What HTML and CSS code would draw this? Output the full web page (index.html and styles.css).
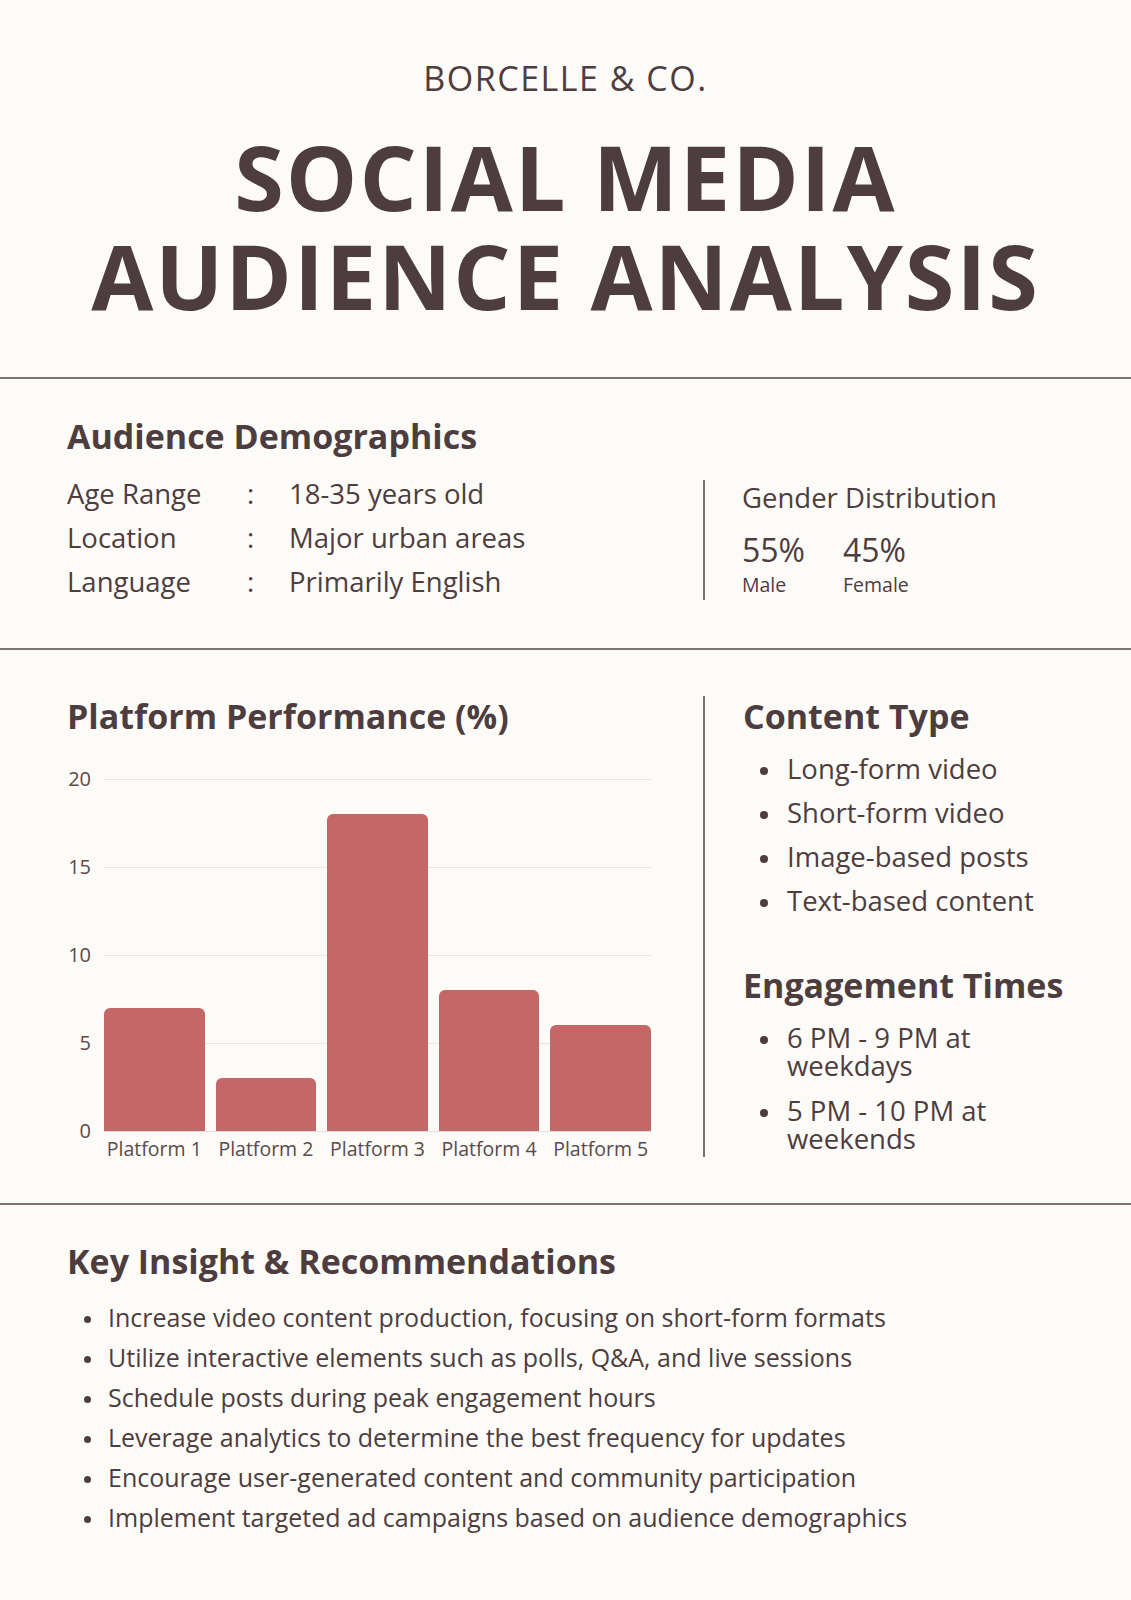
FILE: index.html
```html
<!DOCTYPE html>
<html lang="en">
<head>
<meta charset="utf-8">
<title>Social Media Audience Analysis</title>
<link rel="stylesheet" href="styles.css">
</head>
<body>
<div class="page">
  <header class="hero">
    <p class="brand">BORCELLE &amp; CO.</p>
    <h1 class="title"><span class="title-line">SOCIAL MEDIA</span><span class="title-line">AUDIENCE ANALYSIS</span></h1>
  </header>

  <section class="section demo">
    <h2 class="heading">Audience Demographics</h2>
    <div class="split demo-split">
      <div class="facts">
        <span class="fact-label">Age Range</span><span class="fact-colon">:</span><span class="fact-value">18-35 years old</span>
        <span class="fact-label">Location</span><span class="fact-colon">:</span><span class="fact-value">Major urban areas</span>
        <span class="fact-label">Language</span><span class="fact-colon">:</span><span class="fact-value">Primarily English</span>
      </div>
      <div class="side gender">
        <p class="gender-title">Gender Distribution</p>
        <div class="stats">
          <div class="stat"><span class="stat-num">55%</span><span class="stat-label">Male</span></div>
          <div class="stat"><span class="stat-num">45%</span><span class="stat-label">Female</span></div>
        </div>
      </div>
    </div>
  </section>

  <section class="section perf">
    <div class="split">
      <div class="main">
        <h2 class="heading">Platform Performance (%)</h2>
        <div class="chart">
          <div class="y-axis">
            <span class="tick">20</span>
            <span class="tick">15</span>
            <span class="tick">10</span>
            <span class="tick">5</span>
            <span class="tick">0</span>
          </div>
          <div class="plot">
            <div class="bar" style="height:35%"></div>
            <div class="bar" style="height:15%"></div>
            <div class="bar" style="height:90%"></div>
            <div class="bar" style="height:40%"></div>
            <div class="bar" style="height:30%"></div>
          </div>
          <div class="x-labels">
            <span>Platform 1</span>
            <span>Platform 2</span>
            <span>Platform 3</span>
            <span>Platform 4</span>
            <span>Platform 5</span>
          </div>
        </div>
      </div>
      <div class="side content-side">
        <h2 class="heading">Content Type</h2>
        <ul class="list content-list">
          <li>Long-form video</li>
          <li>Short-form video</li>
          <li>Image-based posts</li>
          <li>Text-based content</li>
        </ul>
        <h2 class="heading eng-heading">Engagement Times</h2>
        <ul class="list eng-list">
          <li>6 PM - 9 PM at weekdays</li>
          <li>5 PM - 10 PM at weekends</li>
        </ul>
      </div>
    </div>
  </section>

  <section class="section insights">
    <h2 class="heading">Key Insight &amp; Recommendations</h2>
    <ul class="list insight-list">
      <li>Increase video content production, focusing on short-form formats</li>
      <li>Utilize interactive elements such as polls, Q&amp;A, and live sessions</li>
      <li>Schedule posts during peak engagement hours</li>
      <li>Leverage analytics to determine the best frequency for updates</li>
      <li>Encourage user-generated content and community participation</li>
      <li>Implement targeted ad campaigns based on audience demographics</li>
    </ul>
  </section>
</div>
</body>
</html>
```

FILE: styles.css
```css
* { box-sizing: border-box; }

html, body {
  margin: 0;
  padding: 0;
  background: #fdfbf8;
}

body {
  font-family: "Open Sans", "Noto Sans", "DejaVu Sans", sans-serif;
  color: #4e3d3f;
}

.page {
  width: 1131px;
  min-height: 1600px;
  background: #fdfbf8;
}

p, h1, h2, ul { margin: 0; padding: 0; }

/* Header */
.hero {
  padding: 58px 0 52px;
  text-align: center;
}

.brand {
  font-size: 34px;
  line-height: 40px;
  font-weight: 400;
  letter-spacing: 1.5px;
}

.title {
  margin-top: 29px;
  font-size: 90px;
  font-weight: 700;
  letter-spacing: 2px;
}

.title-line {
  display: block;
  height: 99px;
  line-height: 99px;
}

/* Sections */
.section {
  border-top: 2px solid #7e7373;
  padding-left: 67px;
}

.heading {
  font-size: 34px;
  line-height: 40px;
  font-weight: 700;
}

.split {
  display: flex;
  align-items: flex-start;
}

.side {
  flex: 1;
  border-left: 2px solid #7e7373;
}

/* Demographics */
.demo {
  padding-top: 37px;
  padding-bottom: 44px;
}

.demo-split {
  margin-top: 16px;
}

.facts {
  width: 636px;
  flex: none;
  display: grid;
  grid-template-columns: 180px 42px auto;
  font-size: 27.5px;
  line-height: 44px;
}

.gender {
  margin-top: 8px;
  padding: 3px 0 3px 37px;
}

.gender-title {
  font-size: 27.5px;
  line-height: 30px;
}

.stats {
  display: flex;
  margin-top: 19px;
}

.stat {
  display: flex;
  flex-direction: column;
  width: 101px;
}

.stat-num {
  font-size: 32px;
  line-height: 36px;
}

.stat-label {
  margin-top: 5px;
  font-size: 19.5px;
  line-height: 24px;
}

/* Platform performance */
.perf {
  padding-top: 46px;
  padding-bottom: 42px;
}

.main {
  width: 636px;
  flex: none;
}

.chart {
  display: grid;
  grid-template-columns: 37px 547px;
  margin-top: 43px;
}

.y-axis {
  height: 352px;
  display: flex;
  flex-direction: column;
  justify-content: space-between;
  align-items: flex-end;
  padding-right: 13px;
  font-size: 20px;
  color: #5a4a4c;
}

.tick {
  height: 0;
  display: flex;
  align-items: center;
  line-height: 24px;
}

.plot {
  height: 353px;
  display: grid;
  grid-template-columns: repeat(5, 1fr);
  column-gap: 11px;
  align-items: end;
  border-bottom: 1px solid #e4e0de;
  background: repeating-linear-gradient(to bottom, #e8e4e2 0, #e8e4e2 1px, transparent 1px, transparent 88px);
}

.bar {
  background: #c56769;
  border-radius: 6px 6px 0 0;
}

.x-labels {
  grid-column: 2;
  display: grid;
  grid-template-columns: repeat(5, 1fr);
  column-gap: 11px;
  margin-top: 5px;
  font-size: 19.5px;
  line-height: 24px;
  text-align: center;
  color: #5a4a4c;
  white-space: nowrap;
}

.content-side {
  padding-left: 38px;
  padding-bottom: 4px;
}

/* Lists */
.list {
  list-style: none;
}

.list li::before {
  content: "";
  display: inline-block;
  width: 8px;
  height: 8px;
  border-radius: 50%;
  background: currentColor;
  vertical-align: middle;
  margin-right: 19px;
  position: relative;
  top: -1px;
}

.content-list {
  margin-top: 11px;
  font-size: 27.5px;
  line-height: 44px;
}

.content-list li,
.eng-list li {
  padding-left: 44px;
  text-indent: -27px;
}

.eng-heading {
  margin-top: 42px;
}

.eng-list {
  margin-top: 19px;
  font-size: 27.5px;
  line-height: 28px;
  width: 300px;
}

.eng-list li + li {
  margin-top: 17px;
}

/* Insights */
.insights {
  padding-top: 36px;
}

.insight-list {
  margin-top: 16px;
  font-size: 25px;
  line-height: 40px;
}

.insight-list li {
  padding-left: 41px;
  text-indent: -24px;
}

.insight-list li::before {
  width: 7px;
  height: 7px;
  margin-right: 17px;
}
```
